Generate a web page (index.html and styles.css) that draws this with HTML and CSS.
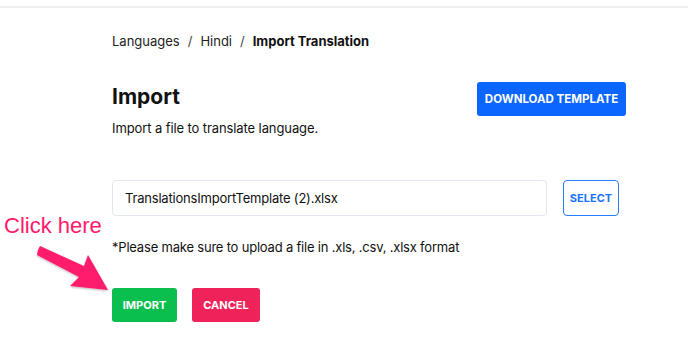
FILE: index.html
```html
<!DOCTYPE html>
<html>
<head>
<meta charset="utf-8">
<link rel="stylesheet" href="styles.css">
</head>
<body>
<div class="topbar"></div>
<main class="page">
  <nav class="crumbs">
    <span>Languages</span><span class="sep">/</span><span>Hindi</span><span class="sep">/</span><strong>Import Translation</strong>
  </nav>
  <section class="head">
    <div>
      <h1 class="title">Import</h1>
      <p class="sub">Import a file to translate language.</p>
    </div>
    <button class="btn btn-blue">DOWNLOAD TEMPLATE</button>
  </section>
  <div class="filerow">
    <div class="field">TranslationsImportTemplate (2).xlsx</div>
    <button class="btn btn-outline">SELECT</button>
  </div>
  <p class="note">*Please make sure to upload a file in .xls, .csv, .xlsx format</p>
  <div class="actions">
    <button class="btn btn-green">IMPORT</button>
    <button class="btn btn-red">CANCEL</button>
  </div>
</main>
<div class="callout">Click here</div>
<svg class="arrow" width="120" height="70" viewBox="0 0 120 70">
  <defs>
    <filter id="sh" x="-20%" y="-20%" width="140%" height="140%">
      <feDropShadow dx="0" dy="1" stdDeviation="1" flood-color="#000" flood-opacity="0.3"/>
    </filter>
  </defs>
  <path filter="url(#sh)" fill="#ff1a6c" d="M38 7 L40 3 L84 23 L88 12 L108 47 L70 43 L79 34 L37 12 Z"/>
</svg>
</body>
</html>
```
FILE: styles.css
```css
* { box-sizing: border-box; }
html, body { margin: 0; padding: 0; background: #fff; }
body {
  font-family: Inter, "DejaVu Sans", sans-serif;
  color: #111;
  width: 688px;
  height: 339px;
  overflow: hidden;
  position: relative;
}
.topbar { height: 8px; border-bottom: 2px solid #efefef; }
.page { padding: 0 62px 0 112px; }
.crumbs { margin-top: 25px; font-size: 13px; line-height: 16px; color: #222; }
.crumbs strong { font-weight: 700; color: #111; }
.crumbs .sep { margin: 0 8px; color: #444; }
.head { display: flex; justify-content: space-between; align-items: flex-start; margin-top: 33px; }
.title { margin: 3px 0 0; font-size: 21px; line-height: 24px; font-weight: 700; }
.sub { margin: 11px 0 0; font-size: 13px; line-height: 16px; letter-spacing: -0.1px; }
.btn {
  font-family: Inter, "DejaVu Sans", sans-serif;
  border: none; border-radius: 3px; color: #fff; font-weight: 700;
  font-size: 11px; letter-spacing: 0; height: 34px; padding: 0; cursor: pointer;
}
.btn-blue { background: #0a66ff; width: 149px; font-size: 11.5px; }
.filerow { display: flex; gap: 16px; margin-top: 44px; }
.field {
  width: 435px; height: 36px; border: 1px solid #e3e7ef; border-radius: 4px;
  font-size: 13px; line-height: 34px; padding-left: 12px; color: #111; letter-spacing: -0.2px;
}
.btn-outline { background: #fff; color: #1a73ff; border: 1px solid #2a7cff; width: 56px; height: 36px; border-radius: 4px; font-size: 11px; }
.note { margin: 23px 0 0; font-size: 13px; line-height: 16px; letter-spacing: -0.2px; }
.actions { display: flex; gap: 15px; margin-top: 33px; }
.btn-green { background: #0bbf4f; width: 65px; }
.btn-red { background: #f0225a; width: 68px; }
.callout {
  position: absolute; left: 4px; top: 213px;
  font-family: "Liberation Sans", Arial, sans-serif; font-size: 22px; color: #ff1a6c;
}
.arrow { position: absolute; left: 0; top: 243px; }
```
